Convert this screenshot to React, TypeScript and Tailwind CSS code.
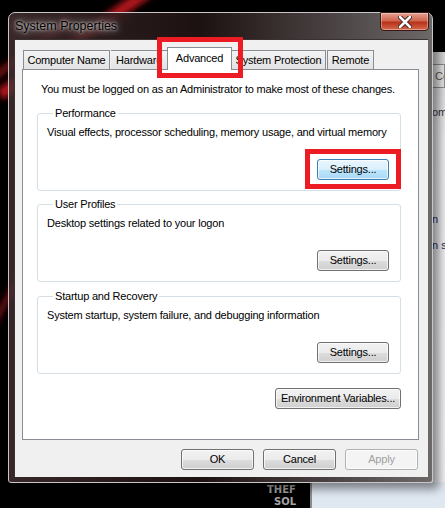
import React from 'react';

const font = { fontFamily: '"Liberation Sans", Arial, sans-serif' };

function Btn({ label, w = 'w-[72px]', hot = false, disabled = false }: { label: string; w?: string; hot?: boolean; disabled?: boolean }) {
    let cls = 'border-[#707070] bg-[linear-gradient(#f2f2f2_0%,#ebebeb_50%,#dddddd_51%,#cfcfcf_100%)] text-black';
    if (hot) cls = 'border-[#3c7fb1] bg-[linear-gradient(#eaf6fd_0%,#d9f0fc_50%,#bee6fd_51%,#a7d9f5_100%)] text-black';
    if (disabled) cls = 'border-[#adb2b5] bg-[#f4f4f4] text-[#a0a0a0]';
    return (
        <div className={`${w} h-[21px] rounded-[3px] border flex items-center justify-center text-[11px] tracking-[-0.2px] leading-none shadow-[inset_0_0_0_1px_rgba(255,255,255,0.7)] ${cls}`}>
            {label}
        </div>
    );
}

function Group({ title, desc, mt }: { title: string; desc: string; mt: string }) {
    return (
        <fieldset className={`${mt} border border-[#d5dfe5] rounded-[3px] pl-[9px] pr-[11px] pb-[10px]`}>
            <legend className="ml-[6px] px-[2px] text-[11px] tracking-[-0.2px] leading-[14px]">{title}</legend>
            <div className="mt-[5px] text-[11px] tracking-[-0.2px] leading-[14px]">{desc}</div>
            <div className="flex justify-end mt-[20px]">
                <Btn label="Settings..." hot={title === 'Performance'} />
            </div>
        </fieldset>
    );
}

export default function App() {
    return (
        <div className="relative w-[445px] h-[508px] bg-black overflow-hidden text-black" style={font}>
            {/* desktop background streaks */}
            <svg className="absolute inset-0" width="445" height="508">
                <defs>
                    <filter id="b"><feGaussianBlur stdDeviation="3" /></filter>
                </defs>
                <path d="M150 -10 L0 95" stroke="#b0141c" strokeWidth="12" filter="url(#b)" />
                <path d="M70 20 L-10 80" stroke="#6a0a10" strokeWidth="8" filter="url(#b)" />
                <path d="M40 240 L-10 330" stroke="#701018" strokeWidth="6" filter="url(#b)" />
            </svg>

            {/* window behind, right edge */}
            <div className="absolute left-[432px] top-[52px] w-[13px] h-[430px] bg-[linear-gradient(#d8d6d8,#ecebef_20%,#f3f1f5)] text-[11px]">
                <div className="mt-[12px] h-[24px] border border-[#8d8d8d] bg-[#e6e6e6] text-[#555] pl-[2px] leading-[22px] whitespace-nowrap overflow-hidden">Co</div>
                <div className="mt-[16px] text-[#333] whitespace-nowrap overflow-hidden">om</div>
                <div className="mt-[90px] text-[#1a2a55] whitespace-nowrap overflow-hidden">n</div>
                <div className="mt-[10px] text-[#1a2a55] whitespace-nowrap overflow-hidden">n s</div>
            </div>
            <div className="absolute left-[312px] top-[482px] w-[133px] h-[26px] bg-[#dfe7f1]" />
            <div className="absolute left-[310px] top-[482px] w-[2px] h-[26px] bg-[#8c8c8c]" />
            <div className="absolute left-[267px] top-[484px] text-[10px] font-bold leading-[12px] text-[#a5a5a5]" style={{ fontFamily: '"DejaVu Sans", sans-serif' }}>
                <div>THEF</div>
                <div className="ml-[7px]">SOL</div>
            </div>

            {/* window */}
            <div className="absolute left-[8px] top-[12px] w-[425px] h-[471px] rounded-t-[7px] rounded-b-[3px] border border-[#c9c5c8] bg-[linear-gradient(90deg,rgba(70,48,50,0.8),rgba(30,18,18,0.95)_45%,rgba(115,110,110,0.95))] shadow-[6px_6px_10px_rgba(0,0,0,0.45)]">
                <div className="flex items-start h-[26px]">
                    <div className="ml-[6px] mt-[4px] text-[12.5px] leading-[18px] text-black [text-shadow:0_0_8px_rgba(255,255,255,0.9),0_0_3px_rgba(255,255,255,0.9)]">System Properties</div>
                    <div className="ml-auto mr-[3px] -mt-px w-[49px] h-[19px] rounded-b-[4px] border border-[#3a1a16] bg-[linear-gradient(#e6a193,#d0664f_45%,#b8321c_55%,#d56a4a)] flex items-center justify-center shadow-[inset_0_0_0_1px_rgba(255,255,255,0.35)]">
                        <svg width="14" height="12" viewBox="0 0 14 12">
                            <path d="M2 1 L12 11 M12 1 L2 11" stroke="#3a2020" strokeWidth="4.5" strokeLinecap="round" />
                            <path d="M2 1 L12 11 M12 1 L2 11" stroke="#ffffff" strokeWidth="2.5" strokeLinecap="round" />
                        </svg>
                    </div>
                </div>

                {/* client area */}
                <div className="ml-[5px] w-[414px] h-[438px] bg-[#f0f0f0] border-l border-t border-[#3a3232] px-[7px] pt-[7px]">
                    <div className="flex items-end h-[22px] text-[11px] tracking-[-0.2px] leading-none">
                        <div className="ml-[1px] w-[87px] h-[19px] border border-b-0 border-[#898c95] bg-[linear-gradient(#f3f3f3,#e2e2e2)] flex items-center justify-center">Computer Name</div>
                        <div className="ml-[1px] w-[57px] h-[19px] border border-b-0 border-l-0 border-[#898c95] bg-[linear-gradient(#f3f3f3,#e2e2e2)] flex items-center pl-[5px]">Hardware</div>
                        <div className="relative -ml-[1px] w-[65px] h-[23px] -mb-px border border-b-0 border-[#898c95] bg-white flex items-center justify-center pb-[2px] z-10">Advanced</div>
                        <div className="w-[94px] h-[19px] border border-b-0 border-l-0 border-[#898c95] bg-[linear-gradient(#f3f3f3,#e2e2e2)] flex items-center justify-center">System Protection</div>
                        <div className="ml-[1px] w-[47px] h-[19px] border border-b-0 border-[#898c95] bg-[linear-gradient(#f3f3f3,#e2e2e2)] flex items-center justify-center">Remote</div>
                    </div>
                    <div className="w-[397px] h-[371px] border border-[#898c95] bg-white pt-[12px] pl-[14px] pr-[17px]">
                        <div className="pl-[4px] text-[11px] tracking-[-0.2px] leading-[14px] whitespace-nowrap">You must be logged on as an Administrator to make most of these changes.</div>
                        <Group mt="mt-[10px]" title="Performance" desc="Visual effects, processor scheduling, memory usage, and virtual memory" />
                        <Group mt="mt-[6px]" title="User Profiles" desc="Desktop settings related to your logon" />
                        <Group mt="mt-[7px]" title="Startup and Recovery" desc="System startup, system failure, and debugging information" />
                        <div className="flex justify-end mt-[14px]">
                            <Btn label="Environment Variables..." w="w-[126px]" />
                        </div>
                    </div>
                    <div className="flex justify-end gap-[9px] mt-[9px] pr-[3px]">
                        <Btn label="OK" w="w-[73px]" />
                        <Btn label="Cancel" w="w-[73px]" />
                        <Btn label="Apply" w="w-[73px]" disabled />
                    </div>
                </div>
            </div>

            {/* red highlight boxes */}
            <div className="absolute left-[157px] top-[37px] w-[86px] h-[41px] border-[5px] border-[#ed1c24]" />
            <div className="absolute left-[305px] top-[149px] w-[96px] h-[40px] border-[5px] border-[#ed1c24]" />
        </div>
    );
}
